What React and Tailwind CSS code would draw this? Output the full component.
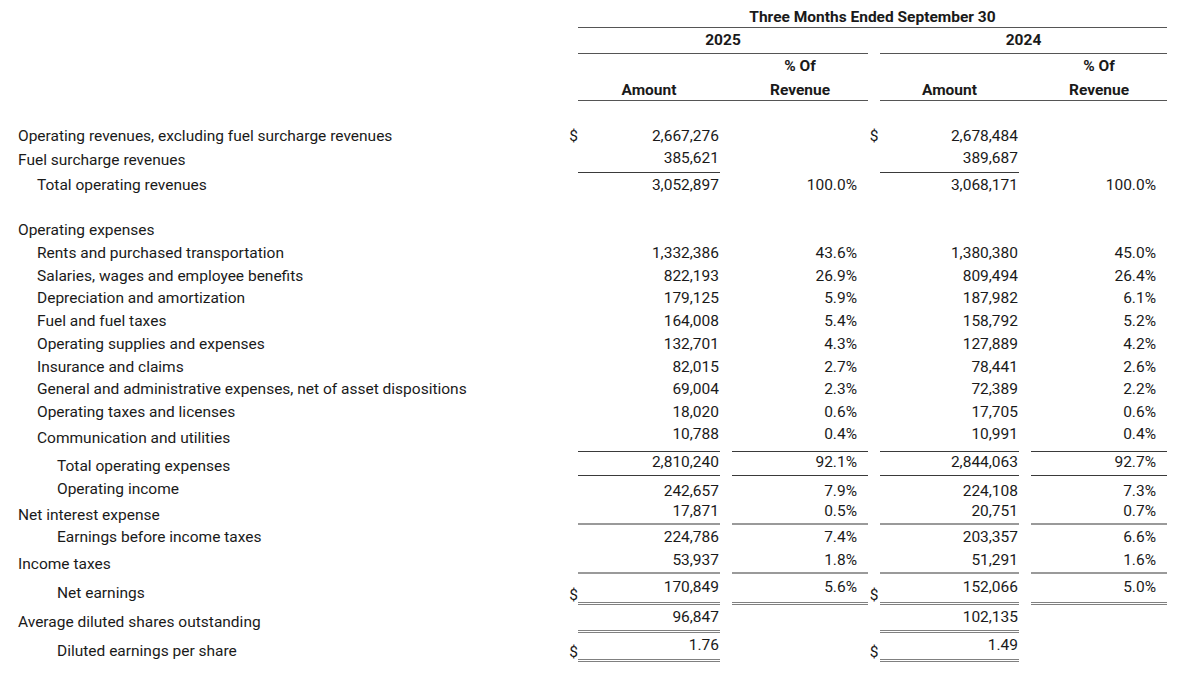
import React from "react";

const A1 = "border-b border-[#3a3a3a]";
const A2 = "border-b-2 border-[#9a9a9a]";
const DBL = "border-b-[3px] border-double border-[#808080]";

const indents = ["pl-[18px]", "pl-[37px]", "pl-[57px]"];

// each row: h = height incl. border, lp/np/dp = label/number/dollar top padding
const rows = [
    { label: "Operating revenues, excluding fuel surcharge revenues", indent: 0, h: "h-[23px]", lp: "pt-[2px]", np: "pt-[2px]", dp: "pt-[2px]", d: true, a1: "2,667,276", a2: "2,678,484" },
    { label: "Fuel surcharge revenues", indent: 0, h: "h-[26px]", lp: "pt-[3px]", np: "pt-px", a1: "385,621", a2: "389,687", ba: A1 },
    { label: "Total operating revenues", indent: 1, h: "h-[22px]", lp: "pt-[2px]", np: "pt-[2px]", a1: "3,052,897", p1: "100.0%", a2: "3,068,171", p2: "100.0%" },
    { spacer: true, h: "h-[23px]" },
    { label: "Operating expenses", indent: 0, h: "h-[23px]", lp: "pt-[2px]", np: "pt-[2px]" },
    { label: "Rents and purchased transportation", indent: 1, h: "h-[23px]", lp: "pt-[2px]", np: "pt-[2px]", a1: "1,332,386", p1: "43.6%", a2: "1,380,380", p2: "45.0%" },
    { label: "Salaries, wages and employee benefits", indent: 1, h: "h-[23px]", lp: "pt-[2px]", np: "pt-[2px]", a1: "822,193", p1: "26.9%", a2: "809,494", p2: "26.4%" },
    { label: "Depreciation and amortization", indent: 1, h: "h-[23px]", lp: "pt-px", np: "pt-px", a1: "179,125", p1: "5.9%", a2: "187,982", p2: "6.1%" },
    { label: "Fuel and fuel taxes", indent: 1, h: "h-[23px]", lp: "pt-px", np: "pt-px", a1: "164,008", p1: "5.4%", a2: "158,792", p2: "5.2%" },
    { label: "Operating supplies and expenses", indent: 1, h: "h-[23px]", lp: "pt-px", np: "pt-px", a1: "132,701", p1: "4.3%", a2: "127,889", p2: "4.2%" },
    { label: "Insurance and claims", indent: 1, h: "h-[23px]", lp: "pt-px", np: "pt-px", a1: "82,015", p1: "2.7%", a2: "78,441", p2: "2.6%" },
    { label: "General and administrative expenses, net of asset dispositions", indent: 1, h: "h-[22px]", lp: "pt-0", np: "pt-0", a1: "69,004", p1: "2.3%", a2: "72,389", p2: "2.2%" },
    { label: "Operating taxes and licenses", indent: 1, h: "h-[22px]", lp: "pt-px", np: "pt-px", a1: "18,020", p1: "0.6%", a2: "17,705", p2: "0.6%" },
    { label: "Communication and utilities", indent: 1, h: "h-[29px]", lp: "pt-[5px]", np: "pt-px", a1: "10,788", p1: "0.4%", a2: "10,991", p2: "0.4%", ba: A1, bp: A1 },
    { label: "Total operating expenses", indent: 2, h: "h-[23px]", lp: "pt-[4px]", np: "pt-0", a1: "2,810,240", p1: "92.1%", a2: "2,844,063", p2: "92.7%", ba: A1, bp: A1 },
    { label: "Operating income", indent: 2, h: "h-[25px]", lp: "pt-[4px]", np: "pt-[6px]", a1: "242,657", p1: "7.9%", a2: "224,108", p2: "7.3%" },
    { label: "Net interest expense", indent: 0, h: "h-[24px]", lp: "pt-[5px]", np: "pt-px", a1: "17,871", p1: "0.5%", a2: "20,751", p2: "0.7%", ba: A2, bp: A2 },
    { label: "Earnings before income taxes", indent: 2, h: "h-[24px]", lp: "pt-[3px]", np: "pt-[3px]", a1: "224,786", p1: "7.4%", a2: "203,357", p2: "6.6%" },
    { label: "Income taxes", indent: 0, h: "h-[26px]", lp: "pt-[6px]", np: "pt-[2px]", a1: "53,937", p1: "1.8%", a2: "51,291", p2: "1.6%", ba: A2, bp: A2 },
    { label: "Net earnings", indent: 2, h: "h-[29px]", lp: "pt-[9px]", np: "pt-[3px]", dp: "pt-[11px]", d: true, a1: "170,849", p1: "5.6%", a2: "152,066", p2: "5.0%", ba: DBL, bp: DBL },
    { label: "Average diluted shares outstanding", indent: 0, h: "h-[30px]", lp: "pt-[9px]", np: "pt-[4px]", a1: "96,847", a2: "102,135", ba: DBL },
    { label: "Diluted earnings per share", indent: 2, h: "h-[28px]", lp: "pt-[8px]", np: "pt-[2px]", dp: "pt-[9px]", d: true, a1: "1.76", a2: "1.49", ba: DBL },
];

const gridCols = "grid grid-cols-[566px_12px_142px_12px_136px_12px_139px_12px_136px]";

const Row = ({ row }) => {
    if (row.spacer) return <div className={row.h} />;
    return (
        <div className={`${gridCols} ${row.h} leading-5 text-[15.5px]`}>
            <div className={`${indents[row.indent]} ${row.lp} whitespace-nowrap`}>{row.label}</div>
            <div className={`${row.dp || ""} text-right`}>{row.d ? "$" : ""}</div>
            <div className={`${row.np} ${row.ba || ""} text-right pr-px`}>{row.a1}</div>
            <div />
            <div className={`${row.np} ${row.bp || ""} text-right pr-[11px]`}>{row.p1}</div>
            <div className={`${row.dp || ""} text-center`}>{row.d ? "$" : ""}</div>
            <div className={`${row.np} ${row.ba || ""} text-right pr-px`}>{row.a2}</div>
            <div />
            <div className={`${row.np} ${row.bp || ""} text-right pr-[11px]`}>{row.p2}</div>
        </div>
    );
};

const App = () => {
    return (
        <div className="w-[1199px] min-h-[674px] bg-white text-[#1a1a1a] font-['Roboto',_'Liberation_Sans',_sans-serif]">
            {/* header */}
            <div className="font-bold text-[15.5px] leading-5">
                <div className={`${gridCols} h-[28px]`}>
                    <div className="col-start-3 col-end-10 pt-[7px] text-center border-b border-[#555]">
                        Three Months Ended September 30
                    </div>
                </div>
                <div className={`${gridCols} h-[26px]`}>
                    <div className="col-start-3 col-end-6 pt-[2px] text-center border-b border-[#555]">2025</div>
                    <div className="col-start-7 col-end-10 pt-[2px] text-center border-b border-[#555]">2024</div>
                </div>
                <div className={`${gridCols} h-[47px]`}>
                    <div className="col-start-3 pt-[26px] text-center border-b border-[#555]">Amount</div>
                    <div className="border-b border-[#555]" />
                    <div className="pt-[2px] text-center border-b border-[#555]">
                        <div>% Of</div>
                        <div className="mt-[4px]">Revenue</div>
                    </div>
                    <div />
                    <div className="pt-[26px] text-center border-b border-[#555]">Amount</div>
                    <div className="border-b border-[#555]" />
                    <div className="pt-[2px] text-center border-b border-[#555]">
                        <div>% Of</div>
                        <div className="mt-[4px]">Revenue</div>
                    </div>
                </div>
            </div>
            <div className="h-[23px]" />
            {rows.map((row, i) => (
                <Row key={i} row={row} />
            ))}
        </div>
    );
};

export default App;
